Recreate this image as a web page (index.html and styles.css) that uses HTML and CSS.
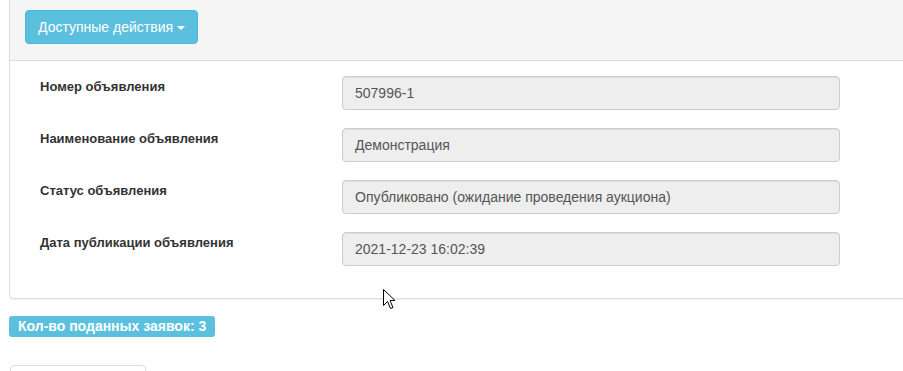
FILE: index.html
```html
<!DOCTYPE html>
<html lang="ru">
<head>
<meta charset="utf-8">
<link rel="stylesheet" href="styles.css">
</head>
<body>
<div class="page">
  <div class="panel">
    <div class="panel-heading">
      <button class="btn-info">Доступные действия <span class="caret"></span></button>
    </div>
    <div class="panel-body">
      <div class="form-row">
        <label class="control-label">Номер объявления</label>
        <div class="form-control">507996-1</div>
      </div>
      <div class="form-row">
        <label class="control-label">Наименование объявления</label>
        <div class="form-control">Демонстрация</div>
      </div>
      <div class="form-row">
        <label class="control-label">Статус объявления</label>
        <div class="form-control">Опубликовано (ожидание проведения аукциона)</div>
      </div>
      <div class="form-row">
        <label class="control-label">Дата публикации объявления</label>
        <div class="form-control">2021-12-23 16:02:39</div>
      </div>
    </div>
  </div>
  <div class="badge-row"><span class="label-info">Кол-во поданных заявок: 3</span></div>
  <div class="tab-stub"></div>
</div>
<svg class="cursor" width="13" height="21" viewBox="0 0 13 21">
  <path d="M0.5 0.5 L0.5 16.5 L4.5 12.5 L7.5 19.5 L10 18.5 L7 11.5 L12 11.5 Z" fill="#fff" stroke="#000" stroke-width="1"/>
</svg>
</body>
</html>
```
FILE: styles.css
```css
html, body {
  margin: 0;
  padding: 0;
  background: #fff;
}
body {
  font-family: "Liberation Sans", Arial, sans-serif;
  font-size: 14px;
  color: #333;
  overflow: hidden;
  height: 371px;
  position: relative;
}
.page {
  padding-left: 9px;
}
.panel {
  border: 1px solid #ddd;
  border-top: none;
  border-right: none;
  border-radius: 0 0 0 4px;
  margin-right: -20px;
  box-shadow: 0 1px 1px rgba(0,0,0,0.05);
}
.panel-heading {
  background: #f5f5f5;
  border-bottom: 1px solid #ddd;
  height: 61px;
  box-sizing: border-box;
  padding: 10px 15px;
}
.btn-info {
  background: #5bc0de;
  border: 1px solid #46b8da;
  border-radius: 4px;
  color: #fff;
  font-family: "Liberation Sans", Arial, sans-serif;
  font-size: 14px;
  height: 34px;
  padding: 0 12px;
  line-height: 32px;
  display: inline-flex;
  align-items: center;
  gap: 4px;
  margin-top: 0;
}
.caret {
  display: inline-block;
  width: 0;
  height: 0;
  border-top: 4px solid #fff;
  border-left: 4px solid transparent;
  border-right: 4px solid transparent;
  margin-top: 1px;
}
.panel-body {
  padding: 15px 15px 32px 30px;
  display: flex;
  flex-direction: column;
  gap: 18px;
}
.form-row {
  display: flex;
  align-items: flex-start;
}
.control-label {
  width: 302px;
  font-weight: bold;
  font-size: 13px;
  padding-top: 3px;
  color: #333;
}
.form-control {
  width: 498px;
  height: 34px;
  box-sizing: border-box;
  background: #eee;
  border: 1px solid #ccc;
  border-radius: 4px;
  padding: 0 12px;
  line-height: 32px;
  color: #555;
  font-size: 14px;
  box-shadow: inset 0 1px 1px rgba(0,0,0,0.075);
}
.badge-row {
  margin-top: 17px;
}
.label-info {
  display: inline-block;
  background: #5bc0de;
  color: #fff;
  font-weight: bold;
  font-size: 14px;
  line-height: 21px;
  height: 21px;
  padding: 0 9px;
  border-radius: 3px;
}
.tab-stub {
  margin-top: 28px;
  margin-left: 1px;
  width: 134px;
  height: 20px;
  border: 1px solid #ddd;
  border-radius: 4px 4px 0 0;
}
.cursor {
  position: absolute;
  left: 383px;
  top: 289px;
}
```
